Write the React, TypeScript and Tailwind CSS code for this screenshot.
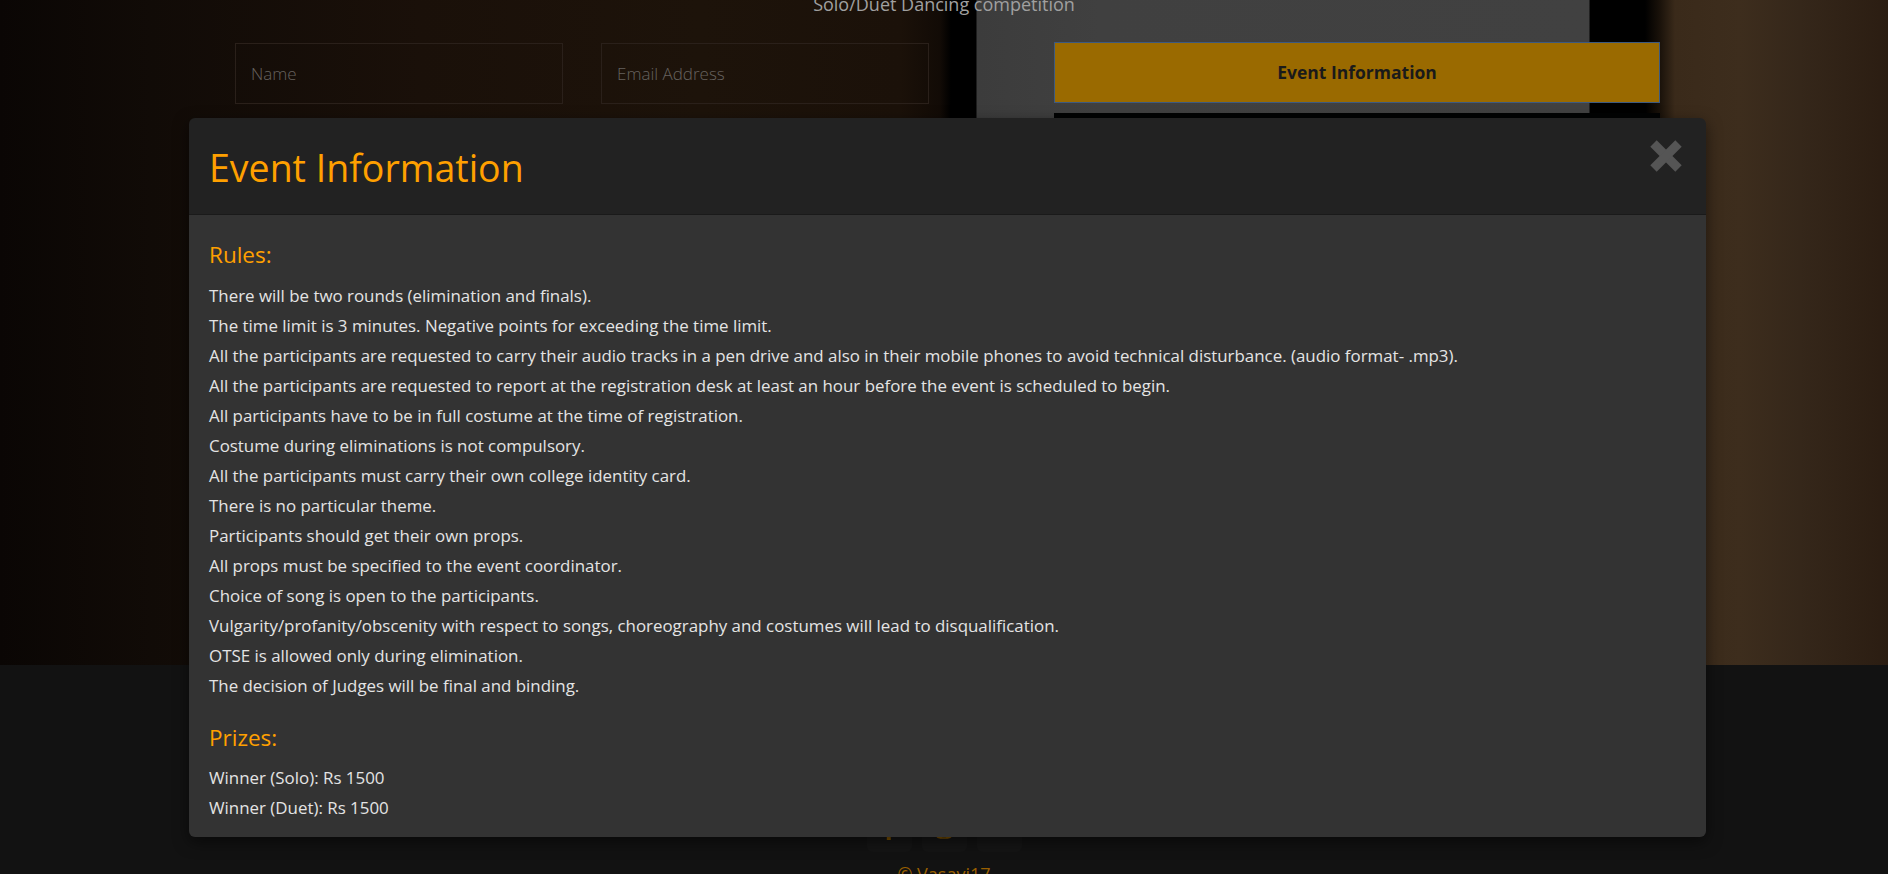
import React from "react";
import { FaFacebookF, FaInstagram, FaYoutube } from "react-icons/fa";

const rules = [
  "There will be two rounds (elimination and finals).",
  "The time limit is 3 minutes. Negative points for exceeding the time limit.",
  "All the participants are requested to carry their audio tracks in a pen drive and also in their mobile phones to avoid technical disturbance. (audio format- .mp3).",
  "All the participants are requested to report at the registration desk at least an hour before the event is scheduled to begin.",
  "All participants have to be in full costume at the time of registration.",
  "Costume during eliminations is not compulsory.",
  "All the participants must carry their own college identity card.",
  "There is no particular theme.",
  "Participants should get their own props.",
  "All props must be specified to the event coordinator.",
  "Choice of song is open to the participants.",
  "Vulgarity/profanity/obscenity with respect to songs, choreography and costumes will lead to disqualification.",
  "OTSE is allowed only during elimination.",
  "The decision of Judges will be final and binding.",
];

const prizes = ["Winner (Solo): Rs 1500", "Winner (Duet): Rs 1500"];

export default function App() {
  return (
    <div
      className="relative w-full h-[874px] overflow-hidden bg-[#121212]"
      style={{ fontFamily: "'Open Sans', 'Noto Sans', 'Liberation Sans', sans-serif" }}
    >
      {/* Hero with wood background */}
      <section className="h-[665px] overflow-hidden bg-[linear-gradient(to_right,#0a0604_0px,#110b07_150px,#1a1009_420px,#1d130a_700px,#1b1109_900px,#120b06_940px,#000_951px,#000_976px,#3c3c3c_977px,#404040_1100px,#414141_1589px,#000_1590px,#000_1645px,#1a120a_1660px,#3a2a1a_1675px,#3d2d1d_1740px,#35271a_1800px,#2b1d12_1888px)]">
        <div className="flex flex-col -mt-[8px]">
          <p className="text-center text-[18px] leading-[24px] text-[#a0a0a0]">
            Solo/Duet Dancing competition
          </p>
          <div className="flex items-start pl-[235px] mt-[27px]">
            <div className="w-[328px] h-[61px] border border-[#2a201a] flex items-center pl-[15px] text-[17px] font-light text-[#66625f]">
              Name
            </div>
            <div className="w-[328px] h-[61px] ml-[38px] border border-[#2a201a] flex items-center pl-[15px] text-[17px] font-light text-[#66625f]">
              Email Address
            </div>
            <div className="flex flex-col ml-[125px] -mt-px">
              <div className="w-[606px] h-[61px] bg-[#9a6a00] border border-[#3d5a80] flex items-center justify-center text-[17.5px] font-bold text-[#1a1a1a]">
                Event Information
              </div>
              <div className="w-[606px] h-[560px] mt-[10px] bg-[#020303]" />
            </div>
          </div>
        </div>
      </section>

      {/* Footer */}
      <footer className="flex flex-col items-center pt-[142px]">
        <div className="flex gap-[10px]">
          <div className="w-[45px] h-[45px] rounded-md bg-[#151515] flex items-center justify-center text-[#7a5000] text-[20px]">
            <FaFacebookF />
          </div>
          <div className="w-[45px] h-[45px] rounded-md bg-[#151515] flex items-center justify-center text-[#7a5000] text-[20px]">
            <FaInstagram />
          </div>
          <div className="w-[45px] h-[45px] rounded-md bg-[#151515] flex items-center justify-center text-[#7a5000] text-[20px]">
            <FaYoutube />
          </div>
        </div>
        <p className="mt-[10px] text-[18px] leading-[24px] text-[#9a6000]">© Vasavi17</p>
      </footer>

      {/* Modal */}
      <div className="absolute top-[118px] left-[189px] w-[1517px] rounded-[6px] overflow-hidden shadow-[0_5px_15px_rgba(0,0,0,0.5)]">
        <div className="h-[97px] bg-[#222222] border-b border-[#1a1a1a] flex items-start justify-between pl-5 pr-[24px]">
          <h1 className="pt-[30px] text-[37.5px] leading-[40px] font-normal text-[#ffa000]">
            Event Information
          </h1>
          <svg width="32" height="32" viewBox="0 0 32 32" className="mt-[22px]">
            <line x1="3.5" y1="3.5" x2="28.5" y2="28.5" stroke="#555555" strokeWidth="9" />
            <line x1="28.5" y1="3.5" x2="3.5" y2="28.5" stroke="#555555" strokeWidth="9" />
          </svg>
        </div>
        <div className="bg-[#333333] px-5 pt-[25px] pb-[14px]">
          <h3 className="text-[22.5px] leading-[30px] text-[#ffa000]">Rules:</h3>
          <div className="mt-[11px] text-[16.9px] leading-[30px] text-[#e4e4e4]">
            {rules.map((r) => (
              <p key={r}>{r}</p>
            ))}
          </div>
          <h3 className="mt-[22px] text-[22.5px] leading-[30px] text-[#ffa000]">Prizes:</h3>
          <div className="mt-[10px] text-[16.9px] leading-[30px] text-[#e4e4e4]">
            {prizes.map((r) => (
              <p key={r}>{r}</p>
            ))}
          </div>
        </div>
      </div>
    </div>
  );
}
